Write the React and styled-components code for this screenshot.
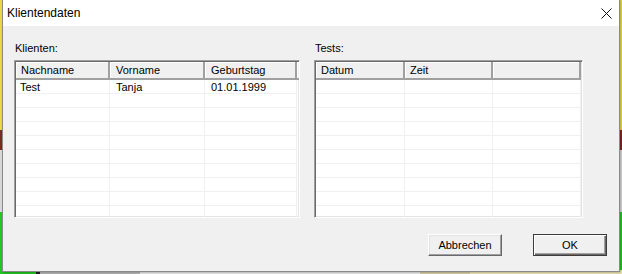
import React from 'react';
import styled, { createGlobalStyle } from 'styled-components';

/* global */
const GlobalStyle = createGlobalStyle`
  html, body {
    margin: 0;
    padding: 0;
  }
  body {
    width: 622px;
    height: 274px;
    overflow: hidden;
    background: #c8c4bc;
    font-family: "Liberation Sans", Arial, sans-serif;
  }
`;

/* backdrop (the app window behind the dialog) */
const Desktop = styled.div`
  position: relative;
  width: 622px;
  height: 274px;
  overflow: hidden;
  background: linear-gradient(
    to bottom,
    #e8d84a 0,
    #e8d84a 130px,
    #7a2a22 130px,
    #7a2a22 150px,
    #d8d8d8 150px,
    #d8d8d8 212px,
    #22c822 212px
  );
`;
const Scrap = styled.div`
  position: absolute;
  bottom: 0;
  height: 4px;
  background: ${(p) => p.color};
`;

const Dialog = styled.div`
  position: absolute;
  left: 2px;
  top: -1px;
  width: 616px;
  height: 271px;
  border: 1px solid #8a8a8a;
  background: #f0f0f0;
  display: flex;
  flex-direction: column;
  box-shadow: 1px 1px 2px rgba(0, 0, 0, 0.25);
`;
const TitleBar = styled.div`
  height: 26px;
  flex-shrink: 0;
  background: #fff;
  display: flex;
  align-items: center;
  justify-content: space-between;
  padding: 0 7px 0 4px;
  font-size: 12px;
  color: #000;
`;
const CloseIcon = styled.svg`
  display: block;
  width: 11px;
  height: 11px;
  margin-top: 1px;
`;
const Body = styled.div`
  flex: 1;
  padding: 16px 12px 0 11px;
  display: flex;
  flex-direction: column;
  font-size: 11px;
  color: #000;
`;
const Panels = styled.div`
  display: flex;
  gap: 14px;
`;
const Panel = styled.div`
  width: ${(p) => p.width}px;
  display: flex;
  flex-direction: column;
  gap: 5px;
`;
const Label = styled.div`
  line-height: 13px;
  padding-left: 1px;
`;
const ListBox = styled.div`
  height: 158px;
  box-sizing: border-box;
  border: 1px solid;
  border-color: #a0a0a0 #fff #fff #a0a0a0;
  box-shadow: inset 1px 1px #696969, inset -1px -1px #e3e3e3;
  padding: 1px;
  background: #fff;
  overflow: hidden;
`;
const Grid = styled.div`
  display: grid;
  grid-template-columns: ${(p) => p.cols};
  grid-auto-rows: 14px;
  grid-template-rows: 18px;
`;
const HeadCell = styled.div`
  box-sizing: border-box;
  background: #f0f0f0;
  border-right: 2px solid #a0a0a0;
  border-bottom: 2px solid #a0a0a0;
  box-shadow: inset 1px 1px #fff;
  padding-left: ${(p) => p.pad || 5}px;
  line-height: 16px;
  white-space: nowrap;
  overflow: hidden;
`;
const Cell = styled.div`
  box-sizing: border-box;
  border-right: 1px solid #f0f0f0;
  border-bottom: 1px solid #f0f0f0;
  padding-left: ${(p) => p.pad || 4}px;
  line-height: 15px;
  white-space: nowrap;
  overflow: hidden;
`;
const Buttons = styled.div`
  margin-top: 16px;
  display: flex;
  justify-content: flex-end;
  gap: 31px;
`;
const Button = styled.button`
  width: 74px;
  height: 22px;
  box-sizing: border-box;
  padding: 0;
  font-family: "Liberation Sans", Arial, sans-serif;
  font-size: 11px;
  color: #000;
  background: #f0f0f0;
  border: 1px solid;
  border-color: ${(p) => (p.primary ? '#3c3c3c' : '#fff #696969 #696969 #fff')};
  box-shadow: ${(p) =>
    p.primary
      ? 'inset 1px 1px #fff, inset -1px -1px #696969, inset -2px -2px #a0a0a0'
      : 'inset -1px -1px #a0a0a0, inset 1px 1px #e3e3e3'};
`;

const ROWS = 10;

const clients = [{ last: 'Test', first: 'Tanja', birth: '01.01.1999' }];

const App = () => {
  const clientRows = Array.from({ length: ROWS }, (_, i) => clients[i] || null);

  return (
    <Desktop>
      <GlobalStyle />
      <Scrap color="#22c822" style={{ left: 0, width: 36 }} />
      <Scrap color="#222" style={{ left: 36, width: 4 }} />
      <Scrap color="#b8b8b8" style={{ left: 40, width: 100 }} />
      <Scrap color="#ececec" style={{ left: 140, width: 280 }} />
      <Scrap color="#d8cfa8" style={{ left: 420, width: 50 }} />
      <Scrap color="#efe8b8" style={{ left: 470, width: 152 }} />
      <Dialog>
        <TitleBar>
          <span>Klientendaten</span>
          <CloseIcon viewBox="0 0 11 11">
            <path d="M0.5 0.5 L10.5 10.5 M10.5 0.5 L0.5 10.5" stroke="#111" strokeWidth="1" fill="none" />
          </CloseIcon>
        </TitleBar>
        <Body>
          <Panels>
            <Panel width={286}>
              <Label>Klienten:</Label>
              <ListBox>
                <Grid cols="94px 95px 92px 1fr">
                  <HeadCell>Nachname</HeadCell>
                  <HeadCell pad={6}>Vorname</HeadCell>
                  <HeadCell pad={6}>Geburtstag</HeadCell>
                  <HeadCell />
                  {clientRows.map((c, i) => (
                    <React.Fragment key={i}>
                      <Cell>{c ? c.last : ''}</Cell>
                      <Cell pad={6}>{c ? c.first : ''}</Cell>
                      <Cell pad={6}>{c ? c.birth : ''}</Cell>
                      <Cell />
                    </React.Fragment>
                  ))}
                </Grid>
              </ListBox>
            </Panel>
            <Panel width={269}>
              <Label>Tests:</Label>
              <ListBox>
                <Grid cols="89px 88px 1fr">
                  <HeadCell>Datum</HeadCell>
                  <HeadCell>Zeit</HeadCell>
                  <HeadCell />
                  {Array.from({ length: ROWS }, (_, i) => (
                    <React.Fragment key={i}>
                      <Cell />
                      <Cell />
                      <Cell />
                    </React.Fragment>
                  ))}
                </Grid>
              </ListBox>
            </Panel>
          </Panels>
          <Buttons>
            <Button>Abbrechen</Button>
            <Button primary>OK</Button>
          </Buttons>
        </Body>
      </Dialog>
    </Desktop>
  );
};

export default App;
